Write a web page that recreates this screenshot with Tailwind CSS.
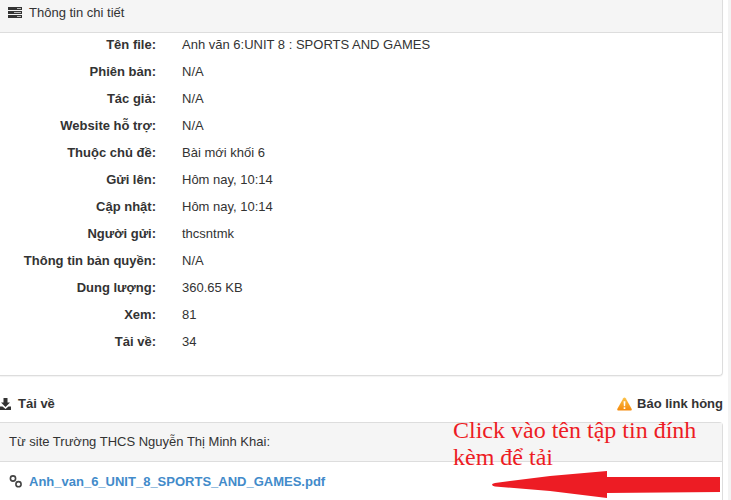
<!DOCTYPE html>
<html><head><meta charset="utf-8"><script src="https://cdn.jsdelivr.net/npm/@tailwindcss/browser@4"></script></head>
<body class="bg-white">
<div class="relative w-[731px] h-[500px] overflow-hidden bg-white font-['Liberation_Sans',Arial,sans-serif] text-[13px] leading-[20px] text-[#333]">
  <div class="absolute right-0 top-0 w-[3px] h-[500px] bg-[#f3f3f3]"></div>
  <section class="w-[723px] h-[376px] border border-[#ddd] border-l-0 border-t-0 rounded-br-[4px] shadow-[0_1px_1px_rgba(0,0,0,0.05)]">
    <header class="h-[33px] bg-[#f5f5f5] border-b border-[#ddd] flex items-start pl-[8px] pt-[3px] gap-[7px]">
      <svg class="w-[14px] h-[11px] mt-[4px]" viewBox="0 0 14 11"><path fill="#333" d="M0 0h14v3H0zM0 4h14v3H0zM0 8h14v3H0z"/><path fill="#bbb" d="M9 1h4v1H9zM6 5h7v1H6zM9 9h4v1H9z"/></svg>
      <span>Thông tin chi tiết</span>
    </header>
    <dl class="grid grid-cols-[156px_1fr] gap-x-[26px] auto-rows-[27px] -mt-[2px]">
      <dt class="font-bold text-right self-center">Tên file:</dt><dd class="self-center">Anh văn 6:UNIT 8 : SPORTS AND GAMES</dd>
      <dt class="font-bold text-right self-center">Phiên bản:</dt><dd class="self-center">N/A</dd>
      <dt class="font-bold text-right self-center">Tác giả:</dt><dd class="self-center">N/A</dd>
      <dt class="font-bold text-right self-center">Website hỗ trợ:</dt><dd class="self-center">N/A</dd>
      <dt class="font-bold text-right self-center">Thuộc chủ đề:</dt><dd class="self-center">Bài mới khối 6</dd>
      <dt class="font-bold text-right self-center">Gửi lên:</dt><dd class="self-center">Hôm nay, 10:14</dd>
      <dt class="font-bold text-right self-center">Cập nhật:</dt><dd class="self-center">Hôm nay, 10:14</dd>
      <dt class="font-bold text-right self-center">Người gửi:</dt><dd class="self-center">thcsntmk</dd>
      <dt class="font-bold text-right self-center">Thông tin bản quyền:</dt><dd class="self-center">N/A</dd>
      <dt class="font-bold text-right self-center">Dung lượng:</dt><dd class="self-center">360.65 KB</dd>
      <dt class="font-bold text-right self-center">Xem:</dt><dd class="self-center">81</dd>
      <dt class="font-bold text-right self-center">Tải về:</dt><dd class="self-center">34</dd>
    </dl>
  </section>
  <div class="w-[723px] flex justify-between items-center h-[46px] pt-[10px]">
    <div class="flex items-center gap-[7px] font-bold"><svg class="w-[11px] h-[12px] -mt-[1px]" viewBox="0 0 11 12"><path fill="#333" d="M3.500 0h4v4.500H10L5.500 9 1 4.500h2.500zM0 8.500h2.500l3 2.500 3-2.500H11V12H0z"/></svg><span>Tải về</span></div>
    <div class="flex items-center gap-[5px] font-bold"><svg class="w-[15px] h-[14px] -mt-[1px]" viewBox="0 0 16 15"><defs><linearGradient id="w" x1="0" y1="0" x2="0" y2="1"><stop offset="0" stop-color="#fbc34a"/><stop offset="1" stop-color="#f58a0b"/></linearGradient></defs><path fill="url(#w)" d="M8 0.500c.6 0 1 .3 1.300.8l6.300 11.300c.5 1-.1 1.900-1.100 1.900h-13c-1 0-1.600-.9-1.100-1.900L6.700 1.300C7 .8 7.400.5 8 .5z"/><path fill="#fff" d="M7 4.500h2l-.3 5.500H7.300zM7.100 11h1.800v1.800H7.100z"/></svg><span>Báo link hỏng</span></div>
  </div>
  <section class="w-[723px] h-[90px] border border-[#ddd] border-l-0 rounded-tr-[4px]">
    <header class="h-[39px] bg-[#f5f5f5] border-b border-[#ddd] pl-[9px] pt-[9px]">Từ site Trường THCS Nguyễn Thị Minh Khai:</header>
    <div class="flex items-center gap-[6px] pl-[9px] h-[40px] font-bold">
      <svg class="w-[14px] h-[13px] -mt-[1px]" viewBox="0 0 14 13" fill="none" stroke="#444" stroke-width="1.600"><circle cx="4" cy="3.500" r="2.600"/><circle cx="9.500" cy="9.200" r="2.600"/></svg>
      <a class="text-[#428bca]">Anh_van_6_UNIT_8_SPORTS_AND_GAMES.pdf</a>
    </div>
  </section>
  <div class="absolute left-[453px] top-[417px] w-[270px] font-['Liberation_Serif',serif] text-[24px] leading-[27px] text-[#ed1c24]">Click vào tên tập tin đính kèm để tải</div>
  <svg class="absolute left-[490px] top-[468px]" width="232" height="32" viewBox="0 0 232 32"><path fill="#ed1c24" d="M2 16.500 Q2 15.500 5 15 L60 8 L117 3 L117 9 L230 9 L230 24 L117 25 L117 30 L60 23 L5 18.500 Q2 18 2 16.500 Z"/></svg>
</div>
</body></html>
